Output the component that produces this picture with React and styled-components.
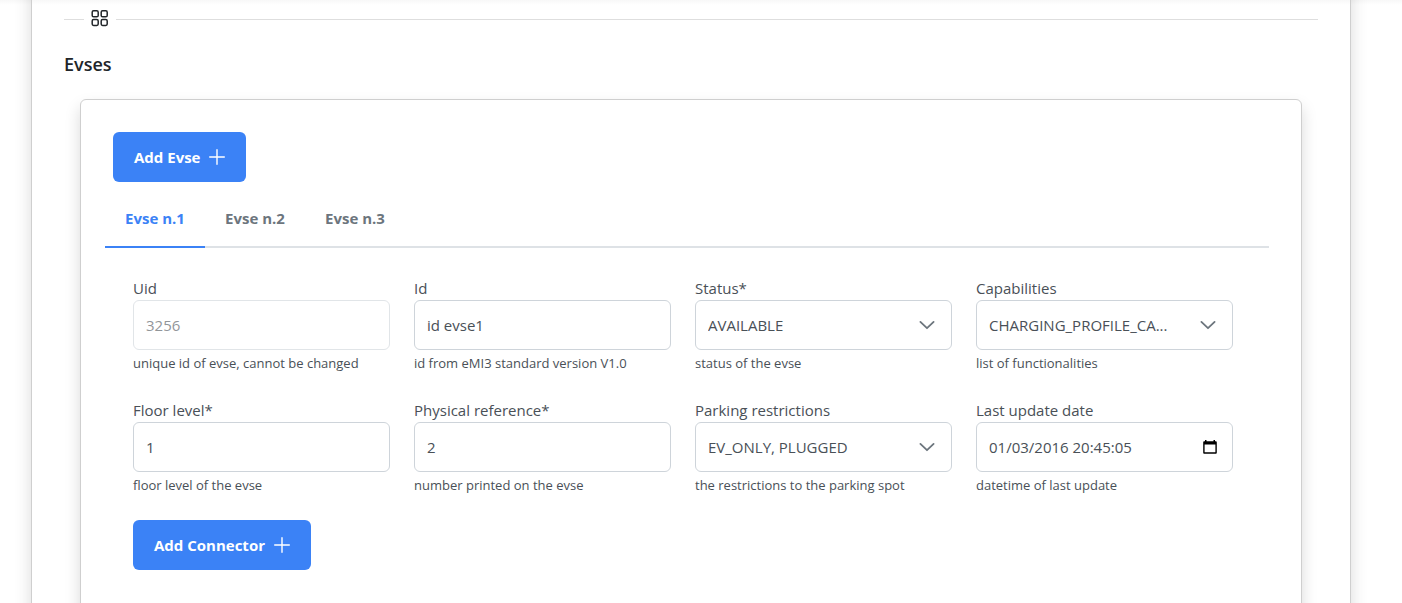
import React, { useState } from "react";
import styled, { createGlobalStyle } from "styled-components";

const GlobalStyle = createGlobalStyle`
  *, *::before, *::after { box-sizing: border-box; }
  body {
    margin: 0;
    background: #fff;
    color: #212529;
    font-family: "Segoe UI", "Open Sans", "Noto Sans", sans-serif;
    font-size: 15px;
    line-height: 24px;
  }
  button, input, select { font: inherit; }
`;

const Page = styled.div`
  display: flow-root;
  height: 100vh;
  overflow: hidden;
  padding: 0 51px 0 31px;
  background: linear-gradient(#f8f8f8, #fff 5px);
`;

const Panel = styled.main`
  margin-top: -32px;
  padding: 37px 32px 32px;
  border: solid #cfcfcf;
  border-width: 0 1px;
  box-shadow: 0 8px 16px rgba(0, 0, 0, 0.15);
`;

const Divider = styled.div`
  display: flex;
  align-items: center;
  gap: 7px;
  height: 28px;
  &::before { content: ""; width: 20px; height: 1px; background: #dedede; }
  &::after { content: ""; flex: 1; height: 1px; background: #dedede; }
`;

const GridIcon = styled.svg`
  width: 18px;
  height: 18px;
  display: block;
`;

const Title = styled.h2`
  margin: 19px 0 23px;
  font-size: 18px;
  line-height: 24px;
  font-weight: 600;
`;

const Card = styled.section`
  min-height: 560px;
  margin: 0 16px;
  padding: 32px;
  background: #fff;
  border: 1px solid #cfcfcf;
  border-radius: 6px;
  box-shadow: 0 8px 16px rgba(0, 0, 0, 0.15);
`;

const Button = styled.button`
  display: inline-flex;
  align-items: center;
  gap: 9px;
  height: 50px;
  padding: 0 21px;
  border: 0;
  border-radius: 6px;
  background: #3b82f6;
  color: #fff;
  font-weight: 700;
  cursor: pointer;
`;

const Tabs = styled.div`
  display: flex;
  margin: 8px 0 0 -8px;
  box-shadow: inset 0 -2px #dee2e6;
`;

const Tab = styled.button`
  width: 100px;
  height: 58px;
  padding: 0;
  border: 0;
  border-bottom: 2px solid ${(p) => (p.$active ? "#3b82f6" : "transparent")};
  background: none;
  color: ${(p) => (p.$active ? "#3b82f6" : "#6c757d")};
  font-weight: 700;
  cursor: pointer;
`;

const TabPanel = styled.div`
  padding: 28px 36px 0 20px;
`;

const Fields = styled.div`
  display: grid;
  grid-template-columns: repeat(4, 1fr);
  gap: 24px;
  margin-bottom: 24px;
`;

const FieldBox = styled.div`
  color: #495057;
  min-width: 0;
`;

const Label = styled.label`
  display: block;
`;

const Control = styled.div`
  display: grid;
  align-items: center;
  > * { grid-area: 1 / 1; }
  > svg { justify-self: end; margin-right: 17px; pointer-events: none; }
  > button { justify-self: end; margin-right: 16px; }
`;

const Input = styled.input`
  width: 100%;
  height: 50px;
  padding: 0 12px;
  border: 1px solid #ced4da;
  border-radius: 6px;
  background: #fff;
  color: #495057;
  &:disabled { opacity: 0.6; }
`;

const Select = styled(Input).attrs({ as: "select" })`
  appearance: none;
  padding-right: 40px;
`;

const Hint = styled.small`
  display: block;
  margin-top: 2px;
  font-size: 13px;
  line-height: 22px;
`;

const PickerButton = styled.button`
  display: flex;
  padding: 0;
  border: 0;
  background: none;
  cursor: pointer;
`;

const Plus = () => (
  <svg width="16" height="16" viewBox="0 0 16 16" fill="none" stroke="#fff" strokeWidth="1.4" strokeLinecap="round" aria-hidden="true">
    <path d="M8 .7v14.6M.7 8h14.6" />
  </svg>
);

const Chevron = () => (
  <svg width="16" height="16" viewBox="0 0 16 16" fill="none" stroke="#6c757d" strokeWidth="1.8" strokeLinecap="round" strokeLinejoin="round" aria-hidden="true">
    <path d="M1.4 4.9 8 11.2l6.6-6.3" />
  </svg>
);

const Calendar = () => (
  <svg width="14" height="16" viewBox="0 0 14 16" aria-hidden="true">
    <path fill="#000" fillRule="evenodd" d="M2 1h1.5v1.2h7V1H12v1.2h.6c.8 0 1.2.5 1.2 1.2v10c0 .8-.4 1.3-1.2 1.3H1.4c-.8 0-1.2-.5-1.2-1.3v-10c0-.7.4-1.2 1.2-1.2H2zM1.6 5.6v7.7h10.8V5.6z" />
  </svg>
);

const fields = [
  { id: "uid", label: "Uid", value: "3256", hint: "unique id of evse, cannot be changed", kind: "disabled" },
  { id: "id", label: "Id", value: "id evse1", hint: "id from eMI3 standard version V1.0" },
  { id: "status", label: "Status*", value: "AVAILABLE", hint: "status of the evse", kind: "select" },
  { id: "capabilities", label: "Capabilities", value: "CHARGING_PROFILE_CA...", hint: "list of functionalities", kind: "select" },
  { id: "floor", label: "Floor level*", value: "1", hint: "floor level of the evse" },
  { id: "reference", label: "Physical reference*", value: "2", hint: "number printed on the evse" },
  { id: "parking", label: "Parking restrictions", value: "EV_ONLY, PLUGGED", hint: "the restrictions to the parking spot", kind: "select" },
  { id: "updated", label: "Last update date", value: "01/03/2016 20:45:05", hint: "datetime of last update", kind: "date" },
];

function Field({ id, label, value, hint, kind }) {
  return (
    <FieldBox>
      <Label htmlFor={id}>{label}</Label>
      <Control>
        {kind === "select" ? (
          <Select id={id} aria-describedby={id + "-hint"}>
            <option>{value}</option>
          </Select>
        ) : (
          <Input id={id} defaultValue={value} disabled={kind === "disabled"} aria-describedby={id + "-hint"} />
        )}
        {kind === "select" && <Chevron />}
        {kind === "date" && (
          <PickerButton type="button" aria-label="Open calendar">
            <Calendar />
          </PickerButton>
        )}
      </Control>
      <Hint id={id + "-hint"}>{hint}</Hint>
    </FieldBox>
  );
}

export default function App() {
  const [active, setActive] = useState(0);
  return (
    <>
      <GlobalStyle />
      <Page>
        <Panel>
          <Divider>
            <GridIcon viewBox="0 0 18 18" fill="none" stroke="#212529" strokeWidth="1.5" aria-hidden="true">
              <rect x="1.2" y=".2" width="6" height="6" rx="1.4" transform="translate(0 .6)" />
              <rect x="10.2" y=".8" width="6" height="6" rx="1.4" />
              <rect x="1.2" y="9.5" width="6" height="6" rx="1.4" />
              <rect x="10.2" y="9.5" width="6" height="6" rx="1.4" />
            </GridIcon>
          </Divider>
          <Title>Evses</Title>
          <Card>
            <Button type="button">
              Add Evse <Plus />
            </Button>
            <Tabs role="tablist">
              {["Evse n.1", "Evse n.2", "Evse n.3"].map((name, i) => (
                <Tab key={name} type="button" role="tab" aria-selected={i === active} $active={i === active} onClick={() => setActive(i)}>
                  {name}
                </Tab>
              ))}
            </Tabs>
            <TabPanel role="tabpanel">
              <Fields>
                {fields.map((f) => (
                  <Field key={f.id} {...f} />
                ))}
              </Fields>
              <Button type="button">
                Add Connector <Plus />
              </Button>
            </TabPanel>
          </Card>
        </Panel>
      </Page>
    </>
  );
}
